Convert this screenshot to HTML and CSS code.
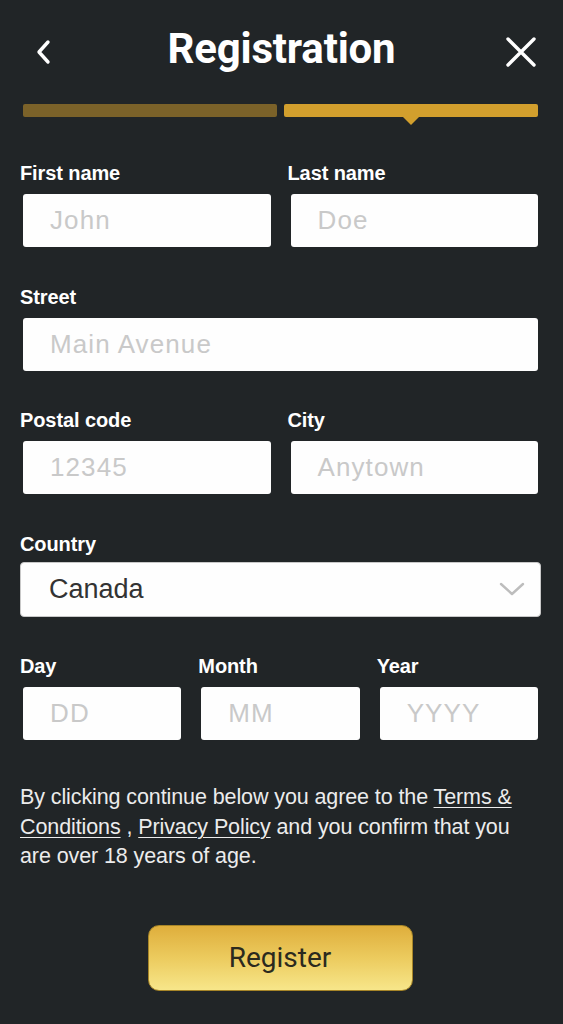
FILE: index.html
```html
<!DOCTYPE html>
<html>
<head>
<meta charset="utf-8">
<link rel="stylesheet" href="styles.css">
</head>
<body>
<header class="top">
  <span class="icon back">
    <svg width="18" height="26" viewBox="0 0 18 26"><path d="M13 3 L4 13 L13 23" fill="none" stroke="#fff" stroke-width="3.4" stroke-linecap="round" stroke-linejoin="round"/></svg>
  </span>
  <h1 class="title">Registration</h1>
  <span class="icon close">
    <svg width="32" height="32" viewBox="0 0 32 32"><path d="M3 3 L29 29 M29 3 L3 29" fill="none" stroke="#fff" stroke-width="3.4" stroke-linecap="round"/></svg>
  </span>
</header>
<div class="page">
  <div class="progress">
    <div class="bar done"></div>
    <div class="bar active"></div>
  </div>
  <form class="form">
    <div class="row two">
      <label class="field"><span class="lbl">First name</span><span class="input ph">John</span></label>
      <label class="field"><span class="lbl">Last name</span><span class="input ph">Doe</span></label>
    </div>
    <div class="row">
      <label class="field"><span class="lbl">Street</span><span class="input ph">Main Avenue</span></label>
    </div>
    <div class="row two">
      <label class="field"><span class="lbl">Postal code</span><span class="input ph">12345</span></label>
      <label class="field"><span class="lbl">City</span><span class="input ph">Anytown</span></label>
    </div>
    <div class="row">
      <label class="field"><span class="lbl">Country</span>
        <span class="select"><span>Canada</span>
          <svg width="26" height="14" viewBox="0 0 26 14"><path d="M2 2 L13 12 L24 2" fill="none" stroke="#bdbdbd" stroke-width="2.4" stroke-linecap="round" stroke-linejoin="round"/></svg>
        </span>
      </label>
    </div>
    <div class="row three">
      <label class="field"><span class="lbl">Day</span><span class="input ph">DD</span></label>
      <label class="field"><span class="lbl">Month</span><span class="input ph">MM</span></label>
      <label class="field"><span class="lbl">Year</span><span class="input ph">YYYY</span></label>
    </div>
  </form>
  <p class="terms">By clicking continue below you agree to the <a>Terms &amp; Conditions</a> , <a>Privacy Policy</a> and you confirm that you are over 18 years of age.</p>
  <div class="actions">
    <button class="register" type="button">Register</button>
  </div>
</div>
</body>
</html>
```
FILE: styles.css
```css
html, body {
  margin: 0;
  padding: 0;
  background: #212527;
}
body {
  font-family: Roboto, "Liberation Sans", sans-serif;
  color: #fff;
  width: 563px;
  height: 1024px;
  overflow: hidden;
}
.top {
  height: 100px;
  display: grid;
  grid-template-columns: 1fr auto 1fr;
  align-items: center;
  padding-top: 4px;
  box-sizing: border-box;
}
.icon {
  display: flex;
  align-items: center;
}
.back { justify-self: start; margin-left: 35px; }
.close { justify-self: end; margin-right: 26px; }
.title {
  margin: 0;
  font-size: 42px;
  font-weight: 700;
  letter-spacing: -0.2px;
  line-height: 1;
  margin-top: -6px;
}
.page {
  padding: 0 25px 0 20px;
}
.progress {
  display: flex;
  gap: 7px;
  padding-left: 3px;
  margin-top: 4px;
}
.bar {
  flex: 1;
  height: 13px;
  border-radius: 2px;
  position: relative;
}
.bar.done { background: #7b6229; }
.bar.active { background: #d29f2d; }
.bar.active::after {
  content: "";
  position: absolute;
  left: 50%;
  top: 13px;
  margin-left: -8px;
  border-left: 8px solid transparent;
  border-right: 8px solid transparent;
  border-top: 8px solid #d29f2d;
}
.form {
  margin-top: 45px;
  display: flex;
  flex-direction: column;
  gap: 38.5px;
}
.row { display: grid; grid-template-columns: 1fr; column-gap: 17px; }
.row.two { grid-template-columns: 1fr 1fr; }
.row.three { grid-template-columns: 1fr 1fr 1fr; }
.field {
  display: flex;
  flex-direction: column;
  gap: 10px;
}
.lbl {
  font-family: "Liberation Sans", Arial, sans-serif;
  font-size: 20px;
  font-weight: 700;
  letter-spacing: -0.1px;
  line-height: 22px;
}
.input {
  display: flex;
  align-items: center;
  height: 53px;
  margin-left: 3px;
  box-sizing: border-box;
  padding-left: 27px;
  background: #fefefe;
  border-radius: 3px;
  font-family: "Liberation Sans", Arial, sans-serif;
  font-size: 26px;
  letter-spacing: 1.1px;
}
.ph { color: #c9c9c9; }
.select {
  display: flex;
  align-items: center;
  justify-content: space-between;
  height: 55px;
  margin-right: -3px;
  box-sizing: border-box;
  padding: 0 15px 0 28px;
  background: #fefefe;
  border: 1.5px solid #c8c8c8;
  border-radius: 4px;
  font-family: "Liberation Sans", Arial, sans-serif;
  font-size: 27px;
  color: #333;
  margin-top: -3px;
}
.terms {
  margin: 43px 0 0 0;
  font-family: "Liberation Sans", Arial, sans-serif;
  font-size: 21.5px;
  line-height: 29.5px;
  letter-spacing: -0.1px;
  color: #ececec;
}
.terms a {
  text-decoration: underline;
  text-underline-offset: 3px;
  text-decoration-thickness: 1px;
}
.actions {
  display: flex;
  justify-content: center;
  margin-top: 53px;
  padding-left: 2px;
}
.register {
  width: 265px;
  height: 66px;
  border-radius: 11px;
  border: 1.5px solid #a68528;
  background: linear-gradient(180deg, #dfae3c 0%, #eccb5e 50%, #f7e68a 100%);
  font-family: Roboto, "Liberation Sans", sans-serif;
  font-size: 28px;
  color: #2b2a1e;
  cursor: pointer;
}
```
